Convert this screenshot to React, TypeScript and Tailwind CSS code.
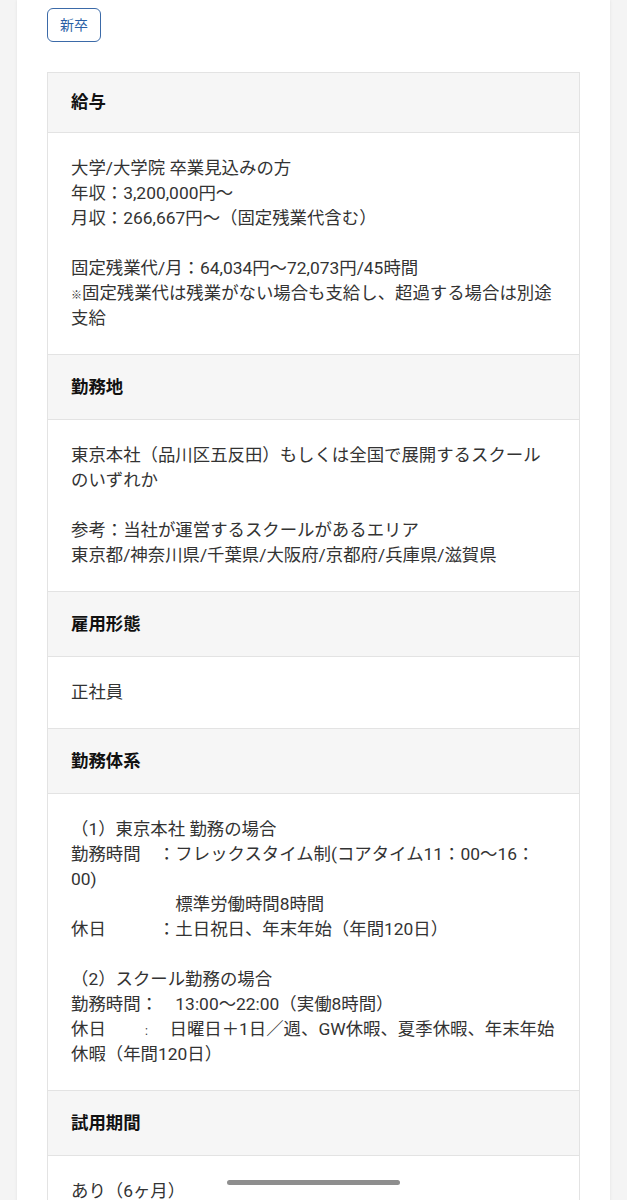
import React from "react";

type Row = { title: string; first?: boolean; body: React.ReactNode };

const rows: Row[] = [
  {
    title: "給与",
    first: true,
    body: (
      <>
        <p>大学/大学院 卒業見込みの方</p>
        <p>年収：3,200,000円〜</p>
        <p>月収：266,667円〜（固定残業代含む）</p>
        <p>&nbsp;</p>
        <p>固定残業代/月：64,034円〜72,073円/45時間</p>
        <p>
          <span className="text-[11px] leading-none">※</span>
          固定残業代は残業がない場合も支給し、超過する場合は別途支給
        </p>
      </>
    ),
  },
  {
    title: "勤務地",
    body: (
      <>
        <p>東京本社（品川区五反田）もしくは全国で展開するスクールのいずれか</p>
        <p>&nbsp;</p>
        <p>参考：当社が運営するスクールがあるエリア</p>
        <p>東京都/神奈川県/千葉県/大阪府/京都府/兵庫県/滋賀県</p>
      </>
    ),
  },
  {
    title: "雇用形態",
    body: <p>正社員</p>,
  },
  {
    title: "勤務体系",
    body: (
      <>
        <p>（1）東京本社 勤務の場合</p>
        <p>勤務時間　：フレックスタイム制(コアタイム11：00〜16：00)</p>
        <p>　　　　　　標準労働時間8時間</p>
        <p>休日　　　：土日祝日、年末年始（年間120日）</p>
        <p>&nbsp;</p>
        <p>（2）スクール勤務の場合</p>
        <p>勤務時間：　13:00〜22:00（実働8時間）</p>
        <p>
          休日　　 <span className="text-[12px] leading-none">:</span>　 日曜日＋1日／週、GW休暇、夏季休暇、年末年始休暇（年間120日）
        </p>
      </>
    ),
  },
  {
    title: "試用期間",
    body: <p>あり（6ヶ月）</p>,
  },
];

export default function App() {
  return (
    <div className="min-h-screen bg-[#f4f4f4] px-[17px] font-[Roboto,'Noto_Sans_CJK_JP',sans-serif]">
      <div className="bg-white px-[30px] pt-[8px] pb-10 min-h-screen shadow-[0_0_3px_rgba(0,0,0,0.08)]">
        <div className="flex">
          <span className="flex h-[34px] w-[54px] items-center justify-center rounded-[6px] border-[1.5px] border-[#3b6aa8] text-[14px] text-[#2a5fa5]">
            新卒
          </span>
        </div>

        <div className="mt-[30px] border-x border-[#e3e3e3]">
          {rows.map((r) => (
            <div key={r.title}>
              <div
                className={
                  r.first
                    ? "bg-[#f6f6f6] px-[23px] py-[17px] text-[17.4px] font-bold leading-[25px] text-[#111] border-y border-[#e3e3e3]"
                    : "bg-[#f6f6f6] px-[23px] py-[20px] text-[17.4px] font-bold leading-[24px] text-[#111] border-b border-[#e3e3e3]"
                }
              >
                {r.title}
              </div>
              <div className="px-[23px] py-[23px] text-[17.4px] leading-[25px] text-[#333] border-b border-[#e3e3e3]">
                {r.body}
              </div>
            </div>
          ))}
        </div>
      </div>

      <div className="fixed bottom-[15px] left-[227px] h-[5px] w-[173px] rounded-full bg-[#8e8e8e]" />
    </div>
  );
}
